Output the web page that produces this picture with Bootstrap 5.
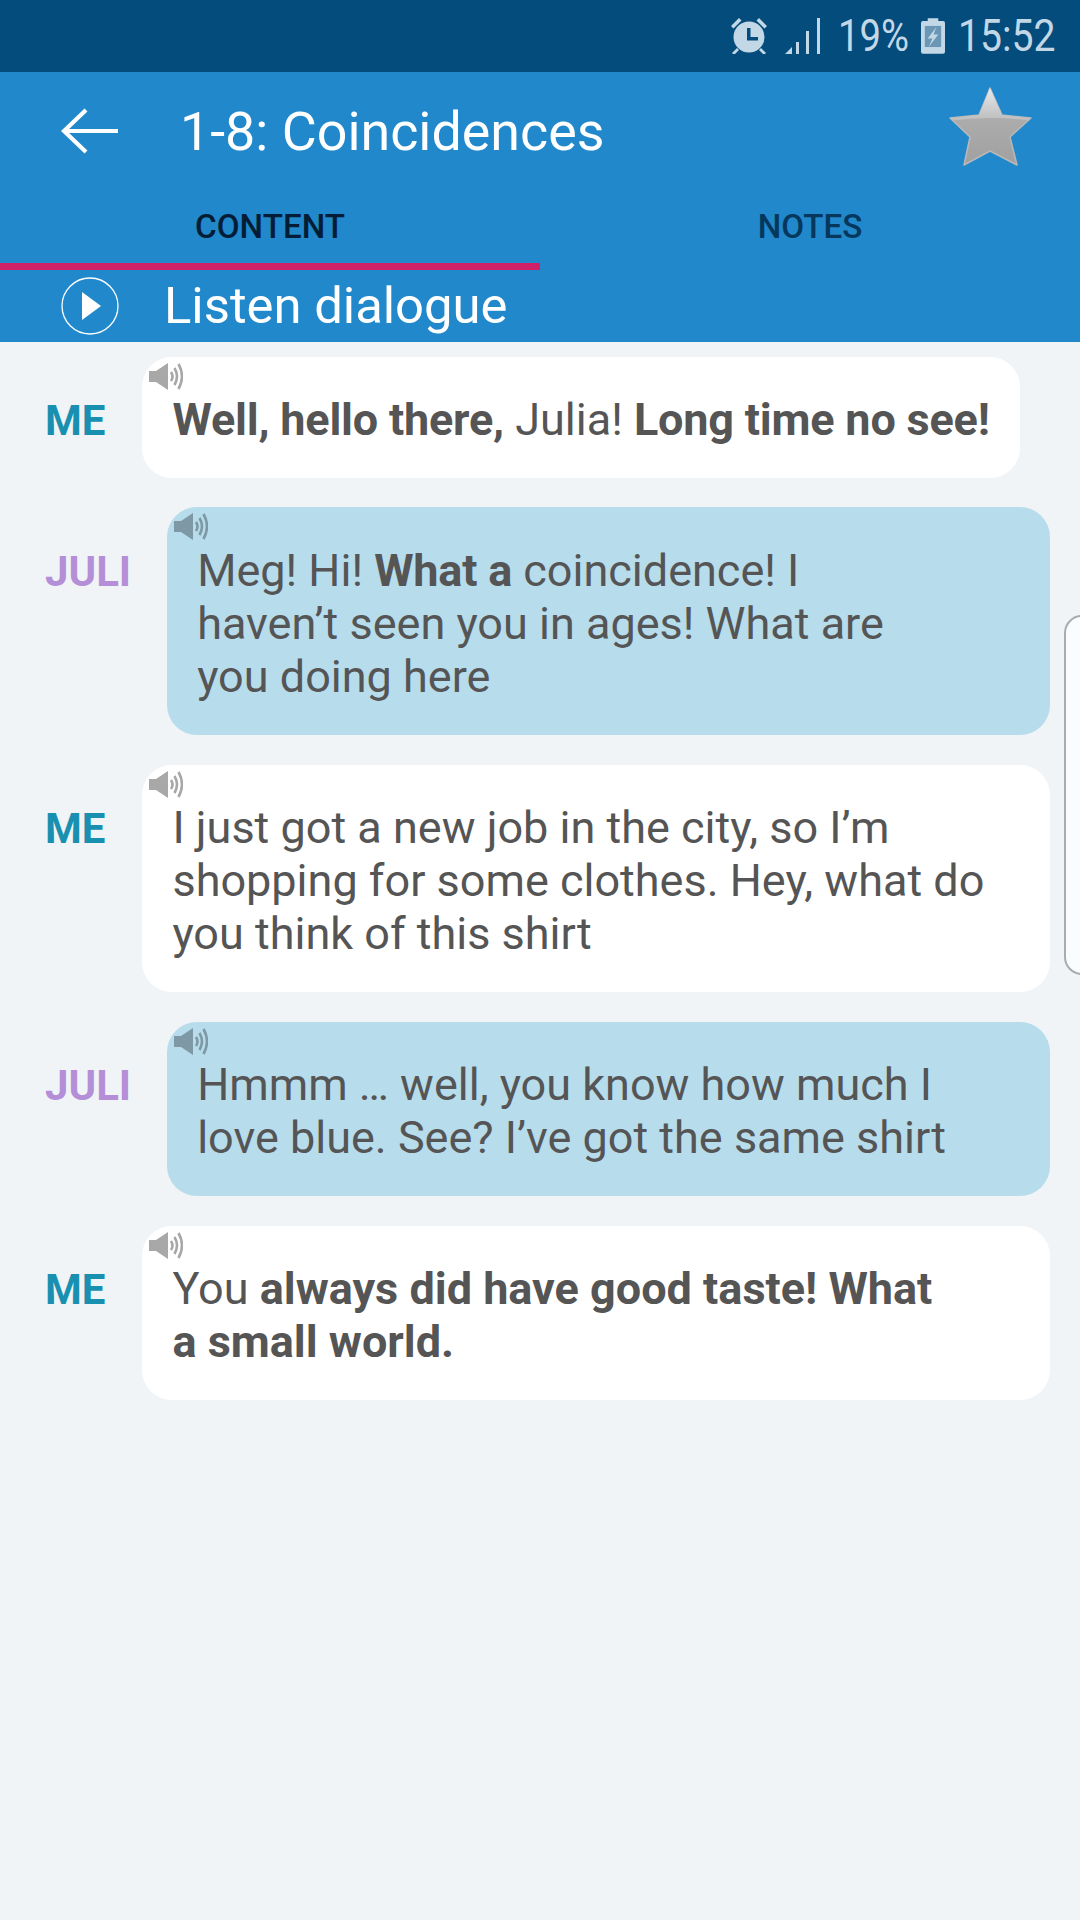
<!DOCTYPE html>
<html lang="en">
<head>
<meta charset="utf-8">
<title>1-8: Coincidences</title>
<link href="https://cdn.jsdelivr.net/npm/bootstrap@5.3.0/dist/css/bootstrap.min.css" rel="stylesheet">
<style>
html,body{height:100%}
body{background:#f0f4f7;font-family:Roboto,"Liberation Sans",sans-serif;color:#555;width:1080px;min-height:1920px;position:relative;overflow:hidden}
.status-strip{height:72px;background:#044c7c;color:#c3d8e6;padding-right:26px}
.status-txt{font-size:45px;line-height:72px;display:inline-block;transform-origin:0 50%;font-weight:400;white-space:nowrap}
.sw-time{width:96px;transform:scaleX(.87)}
.sw-pct{width:68px;transform:scaleX(.85)}
.ic-alarm{margin-right:18px}
.ic-signal{margin-right:18px}
.ic-batt{margin:0 13px 0 15px}
.head-zone{background:#2088cb;color:#fff;height:270px}
.title-row{height:120px;padding-left:61px;padding-right:47px}
.ic-back{margin-bottom:3px}
.title-txt{font-size:53.8px;margin-left:59px;line-height:1}
.star-ic{margin-bottom:10px}
.tab-row{height:78px}
.tab-cell{width:540px;height:78px;font-size:33.2px;font-weight:500;text-align:center;line-height:70px;color:#06375d}
.tab-on{color:#041d36;border-bottom:7px solid #ce2168}
.listen-row{height:72px;padding-left:61px}
.listen-txt{font-size:50.8px;margin-left:45px;line-height:72px}
.chat-zone{padding:14.5px 30px 0 45px}
.msg-row{margin-bottom:29.6px}
.who{font-size:42px;font-weight:700;line-height:53.2px;margin-right:37px}
.who-me{color:#1a90b0}
.who-ju{color:#b48fd8;margin-right:36px}
.say{position:relative;flex:1 1 auto;border-radius:30px;padding:36.5px 30px 31.5px;font-size:45px;line-height:53.2px;color:#555}
.say b{font-weight:700;letter-spacing:-.2px}
.say .wide-bold{letter-spacing:0}
.say-me{background:#fff}
.say-ju{background:#b7dcec}
.say-fit{flex:0 0 auto}
.spk{position:absolute;left:7px;top:6px;width:34px;height:27px}
.edge-tab{position:absolute;left:1064px;top:615px;width:40px;height:360px;background:#fbfcfd;border:2px solid #a9abad;border-radius:18px 0 0 18px}
</style>
</head>
<body>
<div class="status-strip d-flex justify-content-end align-items-center">
  <svg class="ic-alarm" width="36" height="36" viewBox="2 2 36 36" fill="#c3d8e6"><circle cx="20" cy="21" r="15.500"/><path d="M2 10 10 2l2.500 2.500-8 8zM38 10 30 2l-2.500 2.500 8 8zM8 32l-5 5 2 2 5-5zM32 32l5 5-2 2-5-5z"/><path d="M18 12h3.500v9H29v3.500H18z" fill="#044c7c"/></svg>
  <svg class="ic-signal" width="35" height="36" viewBox="0 0 35 36" fill="#c3d8e6"><path d="M0 36 7 29V36zM11 24h3v12h-3zM21 13h3v23h-3zM32 0h3v36h-3z"/></svg>
  <span class="status-txt sw-pct">19%</span>
  <svg class="ic-batt" width="24" height="36" viewBox="0 0 25 37" fill="#c3d8e6"><path d="M7 0h11v3h5a2 2 0 0 1 2 2v30a2 2 0 0 1-2 2H2a2 2 0 0 1-2-2V5a2 2 0 0 1 2-2h5z"/><path d="M4 8h17v22H4z" fill="#6b97b6"/><path d="M16 9 7 21h5l-4 9 10-13h-5l3-8z" fill="#c3d8e6"/></svg>
  <span class="status-txt sw-time">15:52</span>
</div>
<div class="head-zone">
  <div class="title-row d-flex align-items-center">
    <svg class="ic-back" width="60" height="46" viewBox="0 0 60 46" fill="none" stroke="#fff" stroke-width="4.2"><path d="M57 23H3M25 2 3 23l22 21"/></svg>
    <span class="title-txt flex-grow-1">1-8: Coincidences</span>
    <svg class="star-ic" width="84" height="80" viewBox="0 0 84 80"><defs><linearGradient id="gs" x1="0" y1="0" x2="0" y2="1"><stop offset="0" stop-color="#b4b4b4"/><stop offset="1" stop-color="#a0a0a0"/></linearGradient><linearGradient id="gh" x1="0" y1="0" x2="0" y2="1"><stop offset="0" stop-color="#e8ebee"/><stop offset="1" stop-color="#bcbcbc"/></linearGradient><clipPath id="cs"><path d="M41 1 53 28 82 31 61 50 68 78 41 64 15 78 21 50 1 31 30 28Z"/></clipPath></defs><path d="M41 1 53 28 82 31 61 50 68 78 41 64 15 78 21 50 1 31 30 28Z" fill="url(#gs)" stroke="#b8b8b8" stroke-width="1.5" stroke-linejoin="round"/><path d="M0 0H84V34Q42 28 0 34Z" fill="url(#gh)" clip-path="url(#cs)"/></svg>
  </div>
  <div class="tab-row d-flex">
    <div class="tab-cell tab-on">CONTENT</div>
    <div class="tab-cell">NOTES</div>
  </div>
  <div class="listen-row d-flex align-items-center">
    <svg width="58" height="60" viewBox="0 0 58 60"><circle cx="29" cy="30" r="28" fill="none" stroke="#fff" stroke-width="1.3"/><path d="M21 16 40 30 21 44Z" fill="#fff"/></svg>
    <span class="listen-txt">Listen dialogue</span>
  </div>
</div>
<div class="chat-zone">
  <div class="msg-row d-flex align-items-baseline">
    <div class="who who-me">ME</div>
    <div class="say say-me say-fit"><svg class="spk" viewBox="0 0 34 27" fill="#a8a8a8"><path d="M0 8h7L19 0V27L7 19H0z"/><path d="M22 9q3 4.500 0 9M25.500 5q5 8.500 0 17M29.500 1q7 12.500 0 25" fill="none" stroke="#a8a8a8" stroke-width="2.6"/></svg><b>Well, hello there,</b> Julia! <b>Long time no see!</b></div>
  </div>
  <div class="msg-row d-flex align-items-baseline">
    <div class="who who-ju">JULI</div>
    <div class="say say-ju"><svg class="spk" viewBox="0 0 34 27" fill="#7f98a6"><path d="M0 8h7L19 0V27L7 19H0z"/><path d="M22 9q3 4.500 0 9M25.500 5q5 8.500 0 17M29.500 1q7 12.500 0 25" fill="none" stroke="#7f98a6" stroke-width="2.6"/></svg>Meg! Hi! <b>What a</b> coincidence! I<br>haven’t seen you in ages! What are<br>you doing here</div>
  </div>
  <div class="msg-row d-flex align-items-baseline">
    <div class="who who-me">ME</div>
    <div class="say say-me"><svg class="spk" viewBox="0 0 34 27" fill="#a8a8a8"><path d="M0 8h7L19 0V27L7 19H0z"/><path d="M22 9q3 4.500 0 9M25.500 5q5 8.500 0 17M29.500 1q7 12.500 0 25" fill="none" stroke="#a8a8a8" stroke-width="2.6"/></svg>I just got a new job in the city, so I’m<br>shopping for some clothes. Hey, what do<br>you think of this shirt</div>
  </div>
  <div class="msg-row d-flex align-items-baseline">
    <div class="who who-ju">JULI</div>
    <div class="say say-ju"><svg class="spk" viewBox="0 0 34 27" fill="#7f98a6"><path d="M0 8h7L19 0V27L7 19H0z"/><path d="M22 9q3 4.500 0 9M25.500 5q5 8.500 0 17M29.500 1q7 12.500 0 25" fill="none" stroke="#7f98a6" stroke-width="2.6"/></svg>Hmmm … well, you know how much I<br>love blue. See? I’ve got the same shirt</div>
  </div>
  <div class="msg-row d-flex align-items-baseline">
    <div class="who who-me">ME</div>
    <div class="say say-me"><svg class="spk" viewBox="0 0 34 27" fill="#a8a8a8"><path d="M0 8h7L19 0V27L7 19H0z"/><path d="M22 9q3 4.500 0 9M25.500 5q5 8.500 0 17M29.500 1q7 12.500 0 25" fill="none" stroke="#a8a8a8" stroke-width="2.6"/></svg>You <b class="wide-bold">always did have good taste! What<br>a small world.</b></div>
  </div>
</div>
<div class="edge-tab"></div>
<script src="https://cdn.jsdelivr.net/npm/bootstrap@5.3.0/dist/js/bootstrap.bundle.min.js"></script>
</body>
</html>
